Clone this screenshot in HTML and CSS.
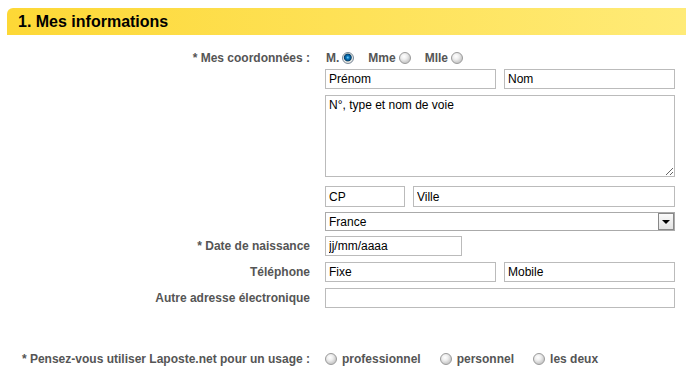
FILE: index.html
```html
<!DOCTYPE html>
<html lang="fr">
<head>
    <meta charset="UTF-8">
    <title>Mes informations</title>
    <link rel="stylesheet" href="styles.css">
</head>
<body>
    <div class="section">
        <h2 class="section-title">1. Mes informations</h2>

        <div class="form">
            <div class="row row-top">
                <div class="lbl lbl-radio">* Mes coordonnées :</div>
                <div class="field">
                    <div class="radios">
                        <label class="opt">M. <input type="radio" name="civ" checked></label>
                        <label class="opt">Mme <input type="radio" name="civ"></label>
                        <label class="opt">Mlle <input type="radio" name="civ"></label>
                    </div>
                    <div class="pair">
                        <input type="text" class="txt" value="Prénom">
                        <input type="text" class="txt" value="Nom">
                    </div>
                    <textarea class="txt area">N°, type et nom de voie</textarea>
                    <div class="pair pair-city">
                        <input type="text" class="txt cp" value="CP">
                        <input type="text" class="txt" value="Ville">
                    </div>
                    <div class="select-wrap">
                        <select class="txt sel">
                            <option>France</option>
                        </select>
                        <span class="sel-btn"></span>
                    </div>
                </div>
            </div>

            <div class="row">
                <div class="lbl">* Date de naissance</div>
                <div class="field">
                    <input type="text" class="txt date" value="jj/mm/aaaa">
                </div>
            </div>

            <div class="row">
                <div class="lbl">Téléphone</div>
                <div class="field">
                    <div class="pair pair-last">
                        <input type="text" class="txt" value="Fixe">
                        <input type="text" class="txt" value="Mobile">
                    </div>
                </div>
            </div>

            <div class="row">
                <div class="lbl">Autre adresse électronique</div>
                <div class="field">
                    <input type="text" class="txt">
                </div>
            </div>

            <div class="row row-usage">
                <div class="lbl lbl-radio">* Pensez-vous utiliser Laposte.net pour un usage :</div>
                <div class="field">
                    <div class="radios radios-usage">
                        <label class="opt"><input type="radio" name="usage"> professionnel</label>
                        <label class="opt"><input type="radio" name="usage"> personnel</label>
                        <label class="opt"><input type="radio" name="usage"> les deux</label>
                    </div>
                </div>
            </div>
        </div>
    </div>
</body>
</html>
```

FILE: styles.css
```css
body {
    margin: 0;
    font-family: "Liberation Sans", Arial, sans-serif;
    font-size: 12px;
    color: #555;
    background: #fff;
}

.section {
    padding-top: 8px;
}

.section-title {
    margin: 0 0 0 7px;
    height: 27px;
    line-height: 27px;
    padding-left: 11px;
    font-size: 16px;
    font-weight: bold;
    color: #000;
    background: linear-gradient(to right, #fdd836, #ffeb78);
    border-top-left-radius: 6px;
}

.form {
    padding-top: 15px;
}

.row {
    display: grid;
    grid-template-columns: 310px 350px;
    column-gap: 15px;
    margin-bottom: 6px;
}

.row-top {
    margin-bottom: 5px;
}

.lbl {
    text-align: right;
    font-weight: bold;
    line-height: 20px;
    white-space: nowrap;
}

.lbl-radio {
    line-height: 16px;
}

.field {
    display: flex;
    flex-direction: column;
}

.radios {
    display: flex;
    align-items: center;
    height: 16px;
    margin-bottom: 3px;
    gap: 13px;
}

.opt {
    display: flex;
    align-items: center;
    gap: 3px;
    font-weight: bold;
    padding-left: 1px;
}

.radios-usage {
    gap: 19px;
    margin-bottom: 0;
}

.radios-usage .opt {
    gap: 5px;
    padding-left: 0;
}

input[type="radio"] {
    appearance: none;
    -webkit-appearance: none;
    width: 12px;
    height: 12px;
    margin: 0;
    border: 1px solid #9a9a9a;
    border-radius: 50%;
    background: radial-gradient(circle at 40% 35%, #fff 0, #eee 3px, #ccc 6px);
}

input[type="radio"]:checked {
    border-color: #7a8a99;
    background: radial-gradient(circle at 48% 45%, #7fd4ff 0, #0a7cc2 1.5px, #06406e 3.5px, #9aa 4px, #f2f2f2 4.5px, #ccc 6px);
}

.txt {
    box-sizing: border-box;
    height: 20px;
    margin: 0;
    padding: 0 3px;
    border: 1px solid #bbb;
    font-family: "Liberation Sans", Arial, sans-serif;
    font-size: 12px;
    color: #000;
    background: #fff;
    outline: none;
}

.pair {
    display: flex;
    gap: 8px;
    margin-bottom: 6px;
}

.pair-last {
    margin-bottom: 0;
}

.pair .txt {
    width: 171px;
}

.area {
    height: 82px;
    padding-top: 2px;
    resize: both;
    margin-bottom: 9px;
}

.pair-city {
    margin-bottom: 5px;
}

.pair-city .txt {
    width: 263px;
    height: 21px;
}

.pair-city .cp {
    width: 80px;
}

.select-wrap {
    position: relative;
    height: 19px;
}

.sel {
    appearance: none;
    -webkit-appearance: none;
    width: 350px;
    height: 19px;
    border-color: #aaa;
    border-radius: 0;
}

.sel-btn {
    position: absolute;
    right: 1px;
    top: 1px;
    width: 14px;
    height: 15px;
    border: 1px solid #888;
    background: linear-gradient(#fafafa, #e2e2e2);
    pointer-events: none;
}

.sel-btn::after {
    content: "";
    position: absolute;
    left: 3px;
    top: 6px;
    border-left: 4px solid transparent;
    border-right: 4px solid transparent;
    border-top: 4px solid #000;
}

.date {
    width: 137px;
}

.row-usage {
    margin-top: 43px;
}
```
